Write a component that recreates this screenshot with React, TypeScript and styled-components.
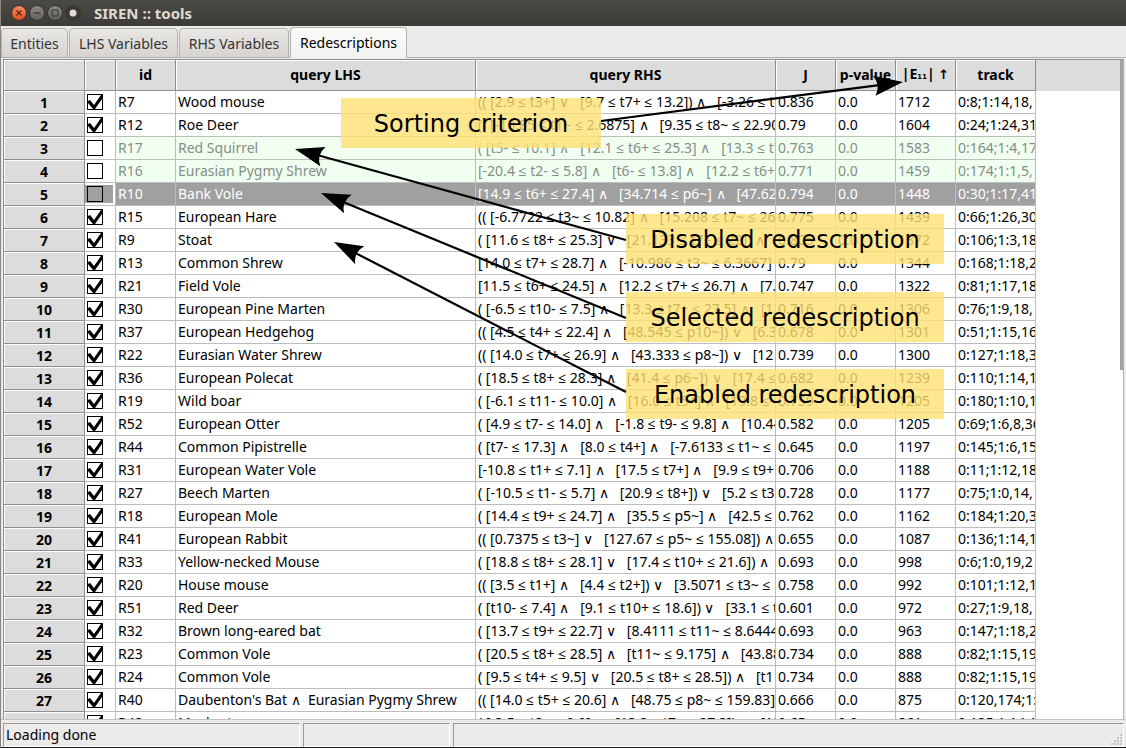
import React from "react";
import styled, { createGlobalStyle, css } from "styled-components";

const Global = createGlobalStyle`
  *, *::before, *::after { box-sizing: border-box; }
  html, body, #root { height: 100%; }
  body { margin: 0; background: #edebe9; overflow: hidden; }
`;

const Window = styled.div`
  position: relative;
  display: flex;
  flex-direction: column;
  height: 100vh;
  background: #edebe9;
  border-left: 1px solid #8b8681;
  border-bottom: 1px solid #1c1b1a;
  color: #000;
  font-family: "Noto Sans", "Open Sans", sans-serif;
  font-size: 14px;
`;

const TitleBar = styled.header`
  display: flex;
  align-items: center;
  flex: none;
  height: 26px;
  padding-left: 10px;
  background: linear-gradient(#4b4a45, #3c3b37);
  color: #dfdbd2;
`;

const Controls = styled.div`
  display: flex;
  gap: 2px;
`;

const ControlButton = styled.button<{ $kind?: "close" | "dark" }>`
  display: grid;
  place-items: center;
  width: 16px;
  height: 16px;
  padding: 0;
  border: 1px solid #35342f;
  border-radius: 8px;
  background: linear-gradient(#8b8982, #62605a);
  ${(p) => p.$kind === "close" && css`background: linear-gradient(#f68a62, #df4c1d);`}
  ${(p) => p.$kind === "dark" && css`background: #393833; border-color: #393833;`}
`;

const Title = styled.h1`
  margin: 0 0 0 13px;
  font-size: 15px;
  line-height: 20px;
  font-weight: 700;
`;

const Tabs = styled.nav`
  display: flex;
  align-items: flex-end;
  gap: 1px;
  flex: none;
  height: 32px;
  box-shadow: inset 0 -1px #b3b0ad;
`;

const Tab = styled.button<{ $active?: boolean; $width: number }>`
  width: ${(p) => p.$width}px;
  height: ${(p) => (p.$active ? 31 : 30)}px;
  padding: 0;
  border: 1px solid #b3b0ad;
  border-bottom-color: ${(p) => (p.$active ? "#f4f3f2" : "#b3b0ad")};
  border-radius: 4px 4px 0 0;
  background: ${(p) => (p.$active ? "linear-gradient(#fbfbfa, #f3f2f1)" : "linear-gradient(#e9e7e5, #d6d3d0)")};
  color: ${(p) => (p.$active ? "#000" : "#333")};
  font: inherit;
  white-space: nowrap;
`;

const Pane = styled.main`
  display: flex;
  flex: 1;
  min-height: 0;
  margin: 1px 2px 0;
  border: solid #8e8e8e;
  border-width: 1px 0 0 1px;
  border-right: 1px solid #b3b0ad;
  background: #fff;
`;

const Viewport = styled.div`
  flex: 1;
  min-width: 0;
  overflow: hidden;
  background: linear-gradient(#dcdcdc 31px, #fff 31px);
`;

const ScrollTrack = styled.div`
  width: 3px;
  background: #fff;
`;

const ScrollThumb = styled.div`
  height: 47%;
  background: #a2a2a2;
`;

const Grid = styled.table`
  width: 1032px;
  table-layout: fixed;
  border-collapse: separate;
  border-spacing: 0;
`;

const HeadCell = styled.th`
  height: 31px;
  padding: 0;
  border-right: 1px solid #8e8e8e;
  border-bottom: 1px solid #8e8e8e;
  background: #dcdcdc;
  box-shadow: inset 1px 1px #fff;
  font-weight: 700;
  line-height: 20px;
  white-space: nowrap;
`;

const RowHead = styled(HeadCell)`
  height: 23px;
  padding-top: 2px;
`;

const Subscript = styled.span`
  font-family: "DejaVu Sans", sans-serif;
  font-size: 11px;
`;

const SortArrow = styled.span`
  font-family: "DejaVu Sans", sans-serif;
  font-size: 13px;
`;

type Look = "enabled" | "disabled" | "selected";

const Row = styled.tr<{ $look: Look }>`
  background: ${(p) => ({ enabled: "#fff", disabled: "#f0fff0", selected: "#a0a0a0" })[p.$look]};
  color: ${(p) => ({ enabled: "#000", disabled: "#878d87", selected: "#fff" })[p.$look]};
  & > th { color: #000; }
`;

const Cell = styled.td`
  height: 23px;
  padding: 0 0 0 2px;
  overflow: hidden;
  border-right: 1px solid #bdbdbd;
  border-bottom: 1px solid #bdbdbd;
  line-height: 20px;
  white-space: pre;
`;

const CheckCell = styled(Cell)<{ $look: Look }>`
  background: ${(p) => (p.$look === "selected" ? "#a0a0a0" : "#fff")};
  box-shadow: ${(p) => (p.$look === "selected" ? "inset -2px 0 #fff, inset 0 2px #fff, inset 0 -2px #fff" : "none")};
`;

const Check = styled.input`
  appearance: none;
  display: block;
  width: 16px;
  height: 16px;
  margin: 0;
  border: 1px solid #000;
  background: transparent;

  &:checked::after {
    content: "";
    display: block;
    width: 14px;
    height: 14px;
    background: #000;
    clip-path: polygon(0 6px, 2px 5px, 6px 10px, 13px 0, 14px 0, 14px 4px, 7px 14px, 5px 14px, 0 8px);
  }
`;

const StatusBar = styled.footer`
  display: grid;
  grid-template-columns: 297px 147px 1fr;
  gap: 3px;
  flex: none;
  height: 28px;
  padding: 3px 2px 2px;
  border-top: 1px solid #c4c1be;
`;

const StatusField = styled.div`
  display: flex;
  justify-content: space-between;
  align-items: flex-end;
  padding-left: 2px;
  border: 1px solid;
  border-color: #9b9895 #fff #fff #9b9895;
  line-height: 22px;
`;

const Arrows = styled.svg`
  position: absolute;
  top: 0;
  left: -1px;
  pointer-events: none;
`;

const Callout = styled.div<{ $x: number; $y: number; $w: number }>`
  position: absolute;
  left: ${(p) => p.$x}px;
  top: ${(p) => p.$y}px;
  width: ${(p) => p.$w}px;
  height: 50px;
  background: rgba(255, 225, 116, 0.8);
  font-family: "DejaVu Sans", sans-serif;
  font-size: 24px;
  line-height: 52px;
  text-align: center;
`;

const rows: string[][] = [
  ["R7", "Wood mouse", "(( [2.9 ≤ t3+] ∨   [9.7 ≤ t7+ ≤ 13.2]) ∧   [-3.26 ≤ t1~]", "0.836", "1712", "0:8;1:14,18,"],
  ["R12", "Roe Deer", "(( [-10.85 ≤ t1~ ≤ 2.6875] ∧   [9.35 ≤ t8~ ≤ 22.90]", "0.79", "1604", "0:24;1:24,31"],
  ["R17", "Red Squirrel", "( [t5- ≤ 10.1] ∧   [12.1 ≤ t6+ ≤ 25.3] ∧   [13.3 ≤ t7+]", "0.763", "1583", "0:164;1:4,17"],
  ["R16", "Eurasian Pygmy Shrew", "[-20.4 ≤ t2- ≤ 5.8] ∧   [t6- ≤ 13.8] ∧   [12.2 ≤ t6+ ", "0.771", "1459", "0:174;1:1,5,"],
  ["R10", "Bank Vole", "[14.9 ≤ t6+ ≤ 27.4] ∧   [34.714 ≤ p6~] ∧   [47.62", "0.794", "1448", "0:30;1:17,41"],
  ["R15", "European Hare", "(( [-6.7722 ≤ t3~ ≤ 10.82] ∧   [15.208 ≤ t7~ ≤ 26", "0.775", "1439", "0:66;1:26,30"],
  ["R9", "Stoat", "( [11.6 ≤ t8+ ≤ 25.3] ∨   [21.133 ≤ t7~ ≤ 22]) ∧", "0.805", "1372", "0:106;1:3,18"],
  ["R13", "Common Shrew", "[14.0 ≤ t7+ ≤ 28.7] ∧   [-10.986 ≤ t3~ ≤ 6.3667] ", "0.79", "1344", "0:168;1:18,2"],
  ["R21", "Field Vole", "[11.5 ≤ t6+ ≤ 24.5] ∧   [12.2 ≤ t7+ ≤ 26.7] ∧   [7.", "0.747", "1322", "0:81;1:17,18"],
  ["R30", "European Pine Marten", "( [-6.5 ≤ t10- ≤ 7.5] ∧   [13.3 ≤ t7+ ≤ 27.5] ∧   [13", "0.716", "1306", "0:76;1:9,18,"],
  ["R37", "European Hedgehog", "(( [4.5 ≤ t4+ ≤ 22.4] ∧   [48.545 ≤ p10~]) ∨   [6.3", "0.678", "1301", "0:51;1:15,16"],
  ["R22", "Eurasian Water Shrew", "(( [14.0 ≤ t7+ ≤ 26.9] ∧   [43.333 ≤ p8~]) ∨   [12", "0.739", "1300", "0:127;1:18,3"],
  ["R36", "European Polecat", "( [18.5 ≤ t8+ ≤ 28.3] ∧   [41.4 ≤ p6~]) ∨   [17.4 ≤", "0.682", "1239", "0:110;1:14,1"],
  ["R19", "Wild boar", "( [-6.1 ≤ t11- ≤ 10.0] ∧   [16.0 ≤ t5+] ∧   [19.8 ≤", "0.759", "1205", "0:180;1:10,1"],
  ["R52", "European Otter", "( [4.9 ≤ t7- ≤ 14.0] ∧   [-1.8 ≤ t9- ≤ 9.8] ∧   [10.44", "0.582", "1205", "0:69;1:6,8,36"],
  ["R44", "Common Pipistrelle", "( [t7- ≤ 17.3] ∧   [8.0 ≤ t4+] ∧   [-7.6133 ≤ t1~ ≤ 8", "0.645", "1197", "0:145;1:6,15"],
  ["R31", "European Water Vole", "[-10.8 ≤ t1+ ≤ 7.1] ∧   [17.5 ≤ t7+] ∧   [9.9 ≤ t9+ ", "0.706", "1188", "0:11;1:12,18"],
  ["R27", "Beech Marten", "( [-10.5 ≤ t1- ≤ 5.7] ∧   [20.9 ≤ t8+]) ∨   [5.2 ≤ t3-", "0.728", "1177", "0:75;1:0,14,"],
  ["R18", "European Mole", "( [14.4 ≤ t9+ ≤ 24.7] ∧   [35.5 ≤ p5~] ∧   [42.5 ≤ ", "0.762", "1162", "0:184;1:20,3"],
  ["R41", "European Rabbit", "(( [0.7375 ≤ t3~] ∨   [127.67 ≤ p5~ ≤ 155.08]) ∧", "0.655", "1087", "0:136;1:14,1"],
  ["R33", "Yellow-necked Mouse", "( [18.8 ≤ t8+ ≤ 28.1] ∨   [17.4 ≤ t10+ ≤ 21.6]) ∧", "0.693", "998", "0:6;1:0,19,2"],
  ["R20", "House mouse", "(( [3.5 ≤ t1+] ∧   [4.4 ≤ t2+]) ∨   [3.5071 ≤ t3~ ≤", "0.758", "992", "0:101;1:12,1"],
  ["R51", "Red Deer", "( [t10- ≤ 7.4] ∧   [9.1 ≤ t10+ ≤ 18.6]) ∨   [33.1 ≤ t8", "0.601", "972", "0:27;1:9,18,"],
  ["R32", "Brown long-eared bat", "( [13.7 ≤ t9+ ≤ 22.7] ∨   [8.4111 ≤ t11~ ≤ 8.6444", "0.693", "963", "0:147;1:18,2"],
  ["R23", "Common Vole", "( [20.5 ≤ t8+ ≤ 28.5] ∧   [t11~ ≤ 9.175] ∧   [43.88", "0.734", "888", "0:82;1:15,19"],
  ["R24", "Common Vole", "( [9.5 ≤ t4+ ≤ 9.5] ∨   [20.5 ≤ t8+ ≤ 28.5]) ∧   [t1", "0.734", "888", "0:82;1:15,19"],
  ["R40", "Daubenton's Bat ∧  Eurasian Pygmy Shrew", "(( [14.0 ≤ t5+ ≤ 20.6] ∧   [48.75 ≤ p8~ ≤ 159.83])", "0.666", "875", "0:120,174;1:"],
  ["R42", "Muskrat", "( [-3.5 ≤ t2~ ≤ 9.9] ∧   [13.2 ≤ t7~ ≤ 27.3]) ∧   [12", "0.65", "861", "0:135;1:14,1"],
];

const lookOf = (i: number): Look => (i === 4 ? "selected" : i === 2 || i === 3 ? "disabled" : "enabled");

const widths = [81, 31, 60, 300, 300, 60, 60, 60, 80];
const headings: React.ReactNode[] = [
  "",
  "",
  "id",
  "query LHS",
  "query RHS",
  "J",
  "p-value",
  <>|E<Subscript>₁₁</Subscript>| <SortArrow>↑</SortArrow></>,
  "track",
];

const arrows = [
  { from: [601, 121], to: [903, 82] },
  { from: [626, 240], to: [295, 149] },
  { from: [626, 318], to: [321, 193] },
  { from: [626, 392], to: [334, 242] },
];

function Arrow({ from, to }: { from: number[]; to: number[] }) {
  const angle = (Math.atan2(to[1] - from[1], to[0] - from[0]) * 180) / Math.PI;
  const length = Math.hypot(to[0] - from[0], to[1] - from[1]);
  return (
    <g transform={`translate(${to[0]} ${to[1]}) rotate(${angle})`}>
      <path d={`M${-length} 0H-20`} stroke="#000" strokeWidth="2.2" />
      <path d="M0 0L-29 -10Q-22 0 -29 10Z" />
    </g>
  );
}

function SizeGrip() {
  const dots = [0, 1, 2, 3].flatMap((r) => Array.from({ length: r + 1 }, (_, c) => [9 - c * 3, r * 3]));
  return (
    <svg width="12" height="12" aria-hidden="true">
      {dots.map(([x, y]) => <rect key={`${x}-${y}`} x={x} y={y} width="2" height="2" fill="#c9c6c3" />)}
    </svg>
  );
}

export default function App() {
  return (
    <Window>
      <Global />
      <TitleBar>
        <Controls>
          <ControlButton $kind="close" aria-label="Close">
            <svg width="8" height="8" viewBox="0 0 8 8"><path d="M1.5 1.5l5 5m0-5l-5 5" stroke="#5c2210" strokeWidth="1.2" /></svg>
          </ControlButton>
          <ControlButton aria-label="Minimize">
            <svg width="8" height="8" viewBox="0 0 8 8"><path d="M0.5 4h7" stroke="#3a3935" strokeWidth="1.2" /></svg>
          </ControlButton>
          <ControlButton aria-label="Maximize">
            <svg width="8" height="8" viewBox="0 0 8 8"><rect x="1" y="1" width="6" height="6" fill="none" stroke="#3a3935" /></svg>
          </ControlButton>
          <ControlButton $kind="dark" aria-label="Window menu">
            <svg width="8" height="8" viewBox="0 0 8 8"><circle cx="4" cy="4" r="3.5" fill="#dfdbd2" /></svg>
          </ControlButton>
        </Controls>
        <Title>SIREN :: tools</Title>
      </TitleBar>
      <Tabs>
        <Tab $width={67}>Entities</Tab>
        <Tab $width={109}>LHS Variables</Tab>
        <Tab $width={110}>RHS Variables</Tab>
        <Tab $width={117} $active>Redescriptions</Tab>
      </Tabs>
      <Pane>
        <Viewport>
          <Grid>
            <colgroup>
              {widths.map((w, i) => <col key={i} style={{ width: w }} />)}
            </colgroup>
            <thead>
              <tr>{headings.map((h, i) => <HeadCell key={i} scope="col">{h}</HeadCell>)}</tr>
            </thead>
            <tbody>
              {rows.map(([id, lhs, rhs, j, e, track], i) => (
                <Row key={id} $look={lookOf(i)}>
                  <RowHead scope="row">{i + 1}</RowHead>
                  <CheckCell $look={lookOf(i)}>
                    <Check type="checkbox" aria-label={`Enable ${id}`} defaultChecked={lookOf(i) === "enabled"} />
                  </CheckCell>
                  <Cell>{id}</Cell>
                  <Cell>{lhs}</Cell>
                  <Cell>{rhs}</Cell>
                  <Cell>{j}</Cell>
                  <Cell>0.0</Cell>
                  <Cell>{e}</Cell>
                  <Cell>{track}</Cell>
                </Row>
              ))}
            </tbody>
          </Grid>
        </Viewport>
        <ScrollTrack><ScrollThumb /></ScrollTrack>
      </Pane>
      <StatusBar>
        <StatusField>Loading done</StatusField>
        <StatusField />
        <StatusField><span /><SizeGrip /></StatusField>
      </StatusBar>
      <Callout $x={340} $y={98} $w={260}>Sorting criterion</Callout>
      <Callout $x={625} $y={214} $w={318}>Disabled redescription</Callout>
      <Callout $x={625} $y={292} $w={318}>Selected redescription</Callout>
      <Callout $x={625} $y={369} $w={318}>Enabled redescription</Callout>
      <Arrows width="1126" height="748" aria-hidden="true">
        {arrows.map((a, i) => <Arrow key={i} {...a} />)}
      </Arrows>
    </Window>
  );
}
